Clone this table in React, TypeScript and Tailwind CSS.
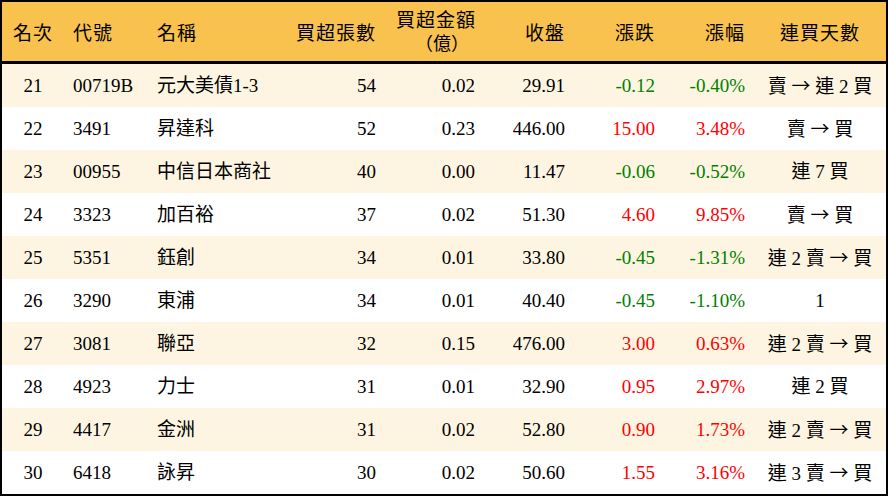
const rows = [
  { rank: 21, code: '00719B', name: '元大美債1-3', lots: '54', amount: '0.02', close: '29.91', chg: '-0.12', pct: '-0.40%', streak: '賣 → 連 2 買' },
  { rank: 22, code: '3491', name: '昇達科', lots: '52', amount: '0.23', close: '446.00', chg: '15.00', pct: '3.48%', streak: '賣 → 買' },
  { rank: 23, code: '00955', name: '中信日本商社', lots: '40', amount: '0.00', close: '11.47', chg: '-0.06', pct: '-0.52%', streak: '連 7 買' },
  { rank: 24, code: '3323', name: '加百裕', lots: '37', amount: '0.02', close: '51.30', chg: '4.60', pct: '9.85%', streak: '賣 → 買' },
  { rank: 25, code: '5351', name: '鈺創', lots: '34', amount: '0.01', close: '33.80', chg: '-0.45', pct: '-1.31%', streak: '連 2 賣 → 買' },
  { rank: 26, code: '3290', name: '東浦', lots: '34', amount: '0.01', close: '40.40', chg: '-0.45', pct: '-1.10%', streak: '1' },
  { rank: 27, code: '3081', name: '聯亞', lots: '32', amount: '0.15', close: '476.00', chg: '3.00', pct: '0.63%', streak: '連 2 賣 → 買' },
  { rank: 28, code: '4923', name: '力士', lots: '31', amount: '0.01', close: '32.90', chg: '0.95', pct: '2.97%', streak: '連 2 買' },
  { rank: 29, code: '4417', name: '金洲', lots: '31', amount: '0.02', close: '52.80', chg: '0.90', pct: '1.73%', streak: '連 2 賣 → 買' },
  { rank: 30, code: '6418', name: '詠昇', lots: '30', amount: '0.02', close: '50.60', chg: '1.55', pct: '3.16%', streak: '連 3 賣 → 買' },
];

const cjk = { fontFamily: '"Noto Sans CJK TC", sans-serif' };

// arrow uses the CJK font so it gets the full-width glyph
function Streak({ text }: { text: string }) {
  const parts = text.split('→');
  return (
    <>
      {parts.map((p, i) => (
        <span key={i}>
          {i > 0 && <span style={cjk}>→</span>}
          {p}
        </span>
      ))}
    </>
  );
}

export default function App() {
  return (
    <div
      className="w-[888px] h-[496px] bg-white border-2 border-black text-black text-[19px] overflow-hidden"
      style={{ fontFamily: '"Liberation Serif", "Noto Sans CJK TC", serif' }}
    >
      {/* Header */}
      <div className="flex h-[62px] bg-[#f9c14d] border-b-[3px] border-black items-center tracking-[1px] pt-[5px]">
        <div className="w-[62px] text-center">名次</div>
        <div className="w-[84px] pl-[9px]">代號</div>
        <div className="w-[140px] pl-[9px]">名稱</div>
        <div className="w-[97px] pr-[9px] text-right">買超張數</div>
        <div className="w-[99px] pr-[8px] text-right flex flex-col items-end gap-[1px] pb-[5px]">
          <div className="leading-[20px]">買超金額</div>
          <div className="pr-[7px] tracking-normal text-[18px] leading-[20px]" style={cjk}>（億）</div>
        </div>
        <div className="w-[90px] pr-[9px] text-right">收盤</div>
        <div className="w-[90px] pr-[9px] text-right">漲跌</div>
        <div className="w-[90px] pr-[9px] text-right">漲幅</div>
        <div className="w-[132px] text-center">連買天數</div>
      </div>

      {/* Rows */}
      {rows.map((r, i) => {
        const up = !r.chg.startsWith('-');
        const color = up ? 'text-[#ff0000]' : 'text-[#008000]';
        return (
          <div
            key={r.rank}
            className={`flex h-[43px] items-center pt-[1px] ${i % 2 === 0 ? 'bg-[#fdf5e1]' : 'bg-white'}`}
          >
            <div className="w-[62px] text-center">{r.rank}</div>
            <div className="w-[84px] pl-[9px]">{r.code}</div>
            <div className="w-[140px] pl-[9px] whitespace-nowrap">{r.name}</div>
            <div className="w-[97px] pr-[9px] text-right">{r.lots}</div>
            <div className="w-[99px] pr-[9px] text-right">{r.amount}</div>
            <div className="w-[90px] pr-[9px] text-right">{r.close}</div>
            <div className={`w-[90px] pr-[9px] text-right ${color}`}>{r.chg}</div>
            <div className={`w-[90px] pr-[9px] text-right ${color}`}>{r.pct}</div>
            <div className="w-[132px] text-center whitespace-nowrap">
              <Streak text={r.streak} />
            </div>
          </div>
        );
      })}
    </div>
  );
}
